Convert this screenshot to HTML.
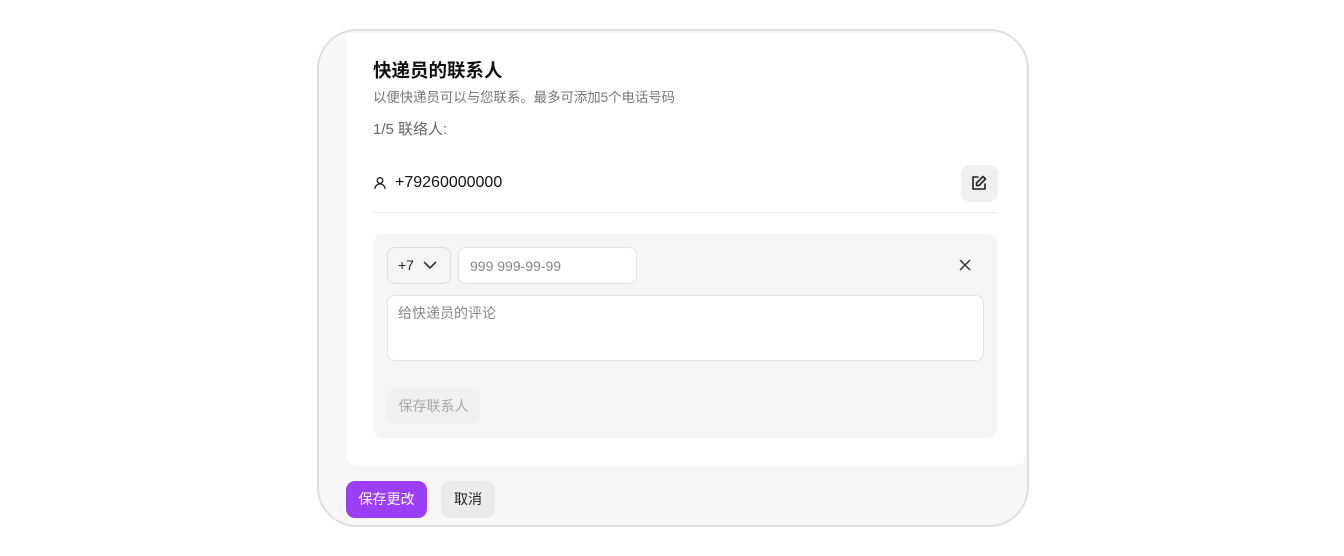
<!DOCTYPE html>
<html><head><meta charset="utf-8"><style>
*{box-sizing:border-box;margin:0;padding:0}
body{width:1344px;height:556px;background:#fff;font-family:"Liberation Sans","Noto Sans CJK SC",sans-serif;position:relative;overflow:hidden}
.frame{position:absolute;left:317px;top:29px;width:712px;height:498px;border:2px solid #dedee2;border-radius:40px;background:#f7f7f9;overflow:hidden}
.card{position:absolute;left:27px;top:2px;width:680px;height:433px;background:#fff;border-radius:0 0 12px 12px}
.abs{position:absolute}
</style></head><body>
<div class="frame">
 <div class="card"></div>
</div>
<div class="abs" style="left:373px;top:57px;font-size:18.5px;font-weight:bold;color:#111">快递员的联系人</div>
<div class="abs" style="left:373px;top:86px;font-size:13.4px;color:#777">以便快递员可以与您联系。最多可添加5个电话号码</div>
<div class="abs" style="left:373px;top:118px;font-size:15px;color:#666">1/5 联络人:</div>
<svg class="abs" style="left:373px;top:176px" width="14" height="14" viewBox="0 0 14 14" fill="none" stroke="#222" stroke-width="1.3"><circle cx="7" cy="4.5" r="2.8"/><path d="M2 13c0-3 2.2-5 5-5s5 2 5 5"/></svg>
<div class="abs" style="left:395px;top:174px;font-size:16px;color:#111">+79260000000</div>
<div class="abs" style="left:961px;top:165px;width:37px;height:37px;background:#f0f0f2;border-radius:9px"></div>
<svg class="abs" style="left:970px;top:174px" width="18" height="18" viewBox="0 0 18 18" fill="none" stroke="#222" stroke-width="1.6" stroke-linejoin="round" stroke-linecap="round"><path d="M8 3H3v12h12v-5"/><path d="M13 2.5l2.5 2.5L9 11.5H6.5V9z"/></svg>
<div class="abs" style="left:373px;top:212px;width:624px;height:1px;background:#ececef"></div>
<div class="abs" style="left:373px;top:234px;width:624px;height:204px;background:#f5f5f7;border-radius:10px"></div>
<div class="abs" style="left:387px;top:247px;width:64px;height:37px;border:1px solid #dcdce0;border-radius:8px;background:#f5f5f7;font-size:14px;color:#222;padding:9px 0 0 10px">+7</div>
<svg class="abs" style="left:422px;top:259px" width="16" height="12" viewBox="0 0 16 12" fill="none" stroke="#333" stroke-width="1.6"><path d="M2 3l6 6 6-6"/></svg>
<div class="abs" style="left:458px;top:247px;width:179px;height:37px;border:1px solid #e4e4e8;border-radius:8px;background:#fff;font-size:14px;color:#888;padding:10px 0 0 11px">999 999-99-99</div>
<svg class="abs" style="left:958px;top:258px" width="14" height="14" viewBox="0 0 14 14" stroke="#333" stroke-width="1.5"><path d="M2 2l10 10M12 2L2 12"/></svg>
<div class="abs" style="left:387px;top:295px;width:597px;height:66px;border:1px solid #e4e4e8;border-radius:8px;background:#fff;font-size:14px;color:#888;padding:7px 0 0 10px">给快递员的评论</div>
<div class="abs" style="left:387px;top:388px;width:93px;height:36px;background:#f0f0f2;border-radius:8px;font-size:14px;color:#aaa;text-align:center;line-height:36px">保存联系人</div>
<div class="abs" style="left:346px;top:481px;width:81px;height:37px;background:#9a3ff5;border-radius:9px;font-size:14px;color:#fff;text-align:center;line-height:37px">保存更改</div>
<div class="abs" style="left:441px;top:481px;width:54px;height:37px;background:#ebebed;border-radius:9px;font-size:14px;color:#222;text-align:center;line-height:37px">取消</div>
</body></html>
